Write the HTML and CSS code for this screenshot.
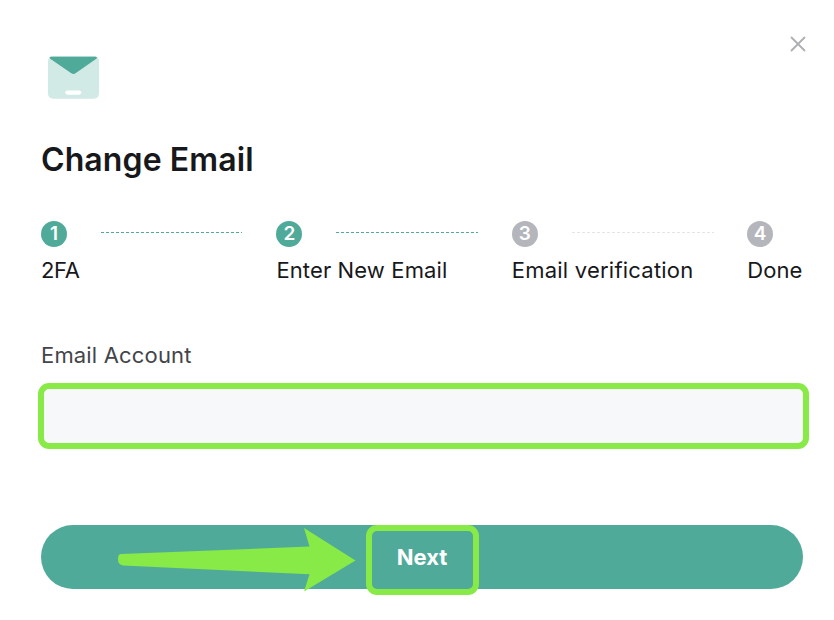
FILE: index.html
```html
<!DOCTYPE html>
<html lang="en">
<head>
<meta charset="utf-8">
<title>Change Email</title>
<link rel="stylesheet" href="styles.css">
</head>
<body>
<main class="dialog">
  <header class="top">
    <svg class="mail" width="51" height="43" viewBox="0 0 51 43" aria-hidden="true">
      <rect width="51" height="42.700" rx="5" fill="#d2eae6"/>
      <path d="M3 .8H47.500Q50 1.400 48.300 2.800L27.500 17.200Q25.500 18.600 23.300 17.200L2.200 2.800Q.8 1.400 3 .8Z" fill="#50aa99"/>
      <rect x="17.300" y="34.500" width="16" height="4.200" rx="2.100" fill="#fff"/>
    </svg>
    <svg class="close" width="16" height="16" viewBox="0 0 16 16" aria-label="Close">
      <path d="M1.500 1.500 14.500 14.500M14.500 1.500 1.500 14.500" fill="none" stroke="#adafb3" stroke-width="1.800" stroke-linecap="round"/>
    </svg>
  </header>
  <h1 class="title">Change Email</h1>
  <ol class="steps">
    <li class="step done"><div class="track"><span class="dot">1</span><svg class="line" width="141" height="1"><path d="M0 .5H141"/></svg></div><span class="label short">2FA</span></li>
    <li class="step done"><div class="track"><span class="dot">2</span><svg class="line" width="142" height="1"><path d="M0 .5H142"/></svg></div><span class="label">Enter New Email</span></li>
    <li class="step"><div class="track"><span class="dot">3</span><svg class="line" width="142" height="1"><path d="M0 .5H142"/></svg></div><span class="label wide">Email verification</span></li>
    <li class="step"><div class="track"><span class="dot">4</span></div><span class="label">Done</span></li>
  </ol>
  <label class="field-label" for="email">Email Account</label>
  <input class="field" id="email" type="email">
  <button class="next" type="button">
    <span class="next-text">Next</span>
    <svg class="arrow" width="240" height="66" viewBox="0 0 240 66" aria-hidden="true">
      <path d="M6 29 194.500 21.500 189 3 240.500 35.500 189 66.500 194.500 49.300 8 40.500Q2.500 40 3 33Q3.300 29 6 29Z" fill="#88ea46"/>
    </svg>
    <span class="marker"></span>
  </button>
</main>
</body>
</html>
```
FILE: styles.css
```css
* { box-sizing: border-box; }
body {
  margin: 0;
  background: #fff;
  color: #17181b;
  font-family: Inter, "Liberation Sans", sans-serif;
}
.dialog {
  width: 834px;
  height: 620px;
  padding: 36px 28px 0 41px;
  overflow: hidden;
}
.top {
  display: flex;
  justify-content: space-between;
  height: 63px;
}
.mail { margin: 20px 0 0 7px; }
.title {
  margin: 41px 0 0;
  font-size: 32px;
  line-height: 40px;
  font-weight: 600;
  letter-spacing: .1px;
  white-space: nowrap;
}
.steps {
  display: flex;
  margin: 41px 0 0;
  padding: 0;
  list-style: none;
}
.step {
  flex: 0 0 235.400px;
  --tone: #b5b6bc;
  --dash: #e4e5e7;
}
.step:last-child { flex-basis: 59px; }
.done { --tone: #50aa99; --dash: #50aa99; }
.track { display: flex; }
.dot {
  width: 26px;
  height: 26px;
  border-radius: 50%;
  background: var(--tone);
  color: #fff;
  font-size: 19px;
  line-height: 26px;
  font-weight: 600;
  text-align: center;
}
.line { margin: 11px 0 0 34px; }
.line path {
  stroke: var(--dash);
  stroke-width: 1;
  stroke-dasharray: 3 2;
}
.label {
  display: block;
  margin-top: 9px;
  font-size: 22px;
  line-height: 28px;
  letter-spacing: .12px;
  white-space: nowrap;
}
.short { letter-spacing: -.3px; }
.wide { letter-spacing: .22px; }
.field-label {
  display: block;
  margin-top: 57px;
  color: #43454b;
  font-size: 22px;
  line-height: 28px;
  letter-spacing: .17px;
}
.field {
  display: block;
  width: 771px;
  height: 66px;
  margin: 13.500px 0 0 -3px;
  padding: 0 18px;
  border: 6px solid #88ea46;
  border-radius: 11px;
  outline: 0;
  background: #f6f8fa;
  font: inherit;
}
.next {
  position: relative;
  display: block;
  width: 762px;
  height: 64px;
  margin-top: 76.500px;
  padding: 0;
  border: 0;
  border-radius: 32px;
  background: #50aa99;
  color: #fff;
  font-family: inherit;
  font-size: 22px;
  line-height: 64px;
  font-weight: 700;
}
.arrow {
  position: absolute;
  left: 74px;
  top: 0;
  overflow: visible;
}
.marker {
  position: absolute;
  left: 325px;
  top: 0;
  width: 113px;
  height: 70px;
  border: 6px solid #88ea46;
  border-radius: 11px;
}
```
